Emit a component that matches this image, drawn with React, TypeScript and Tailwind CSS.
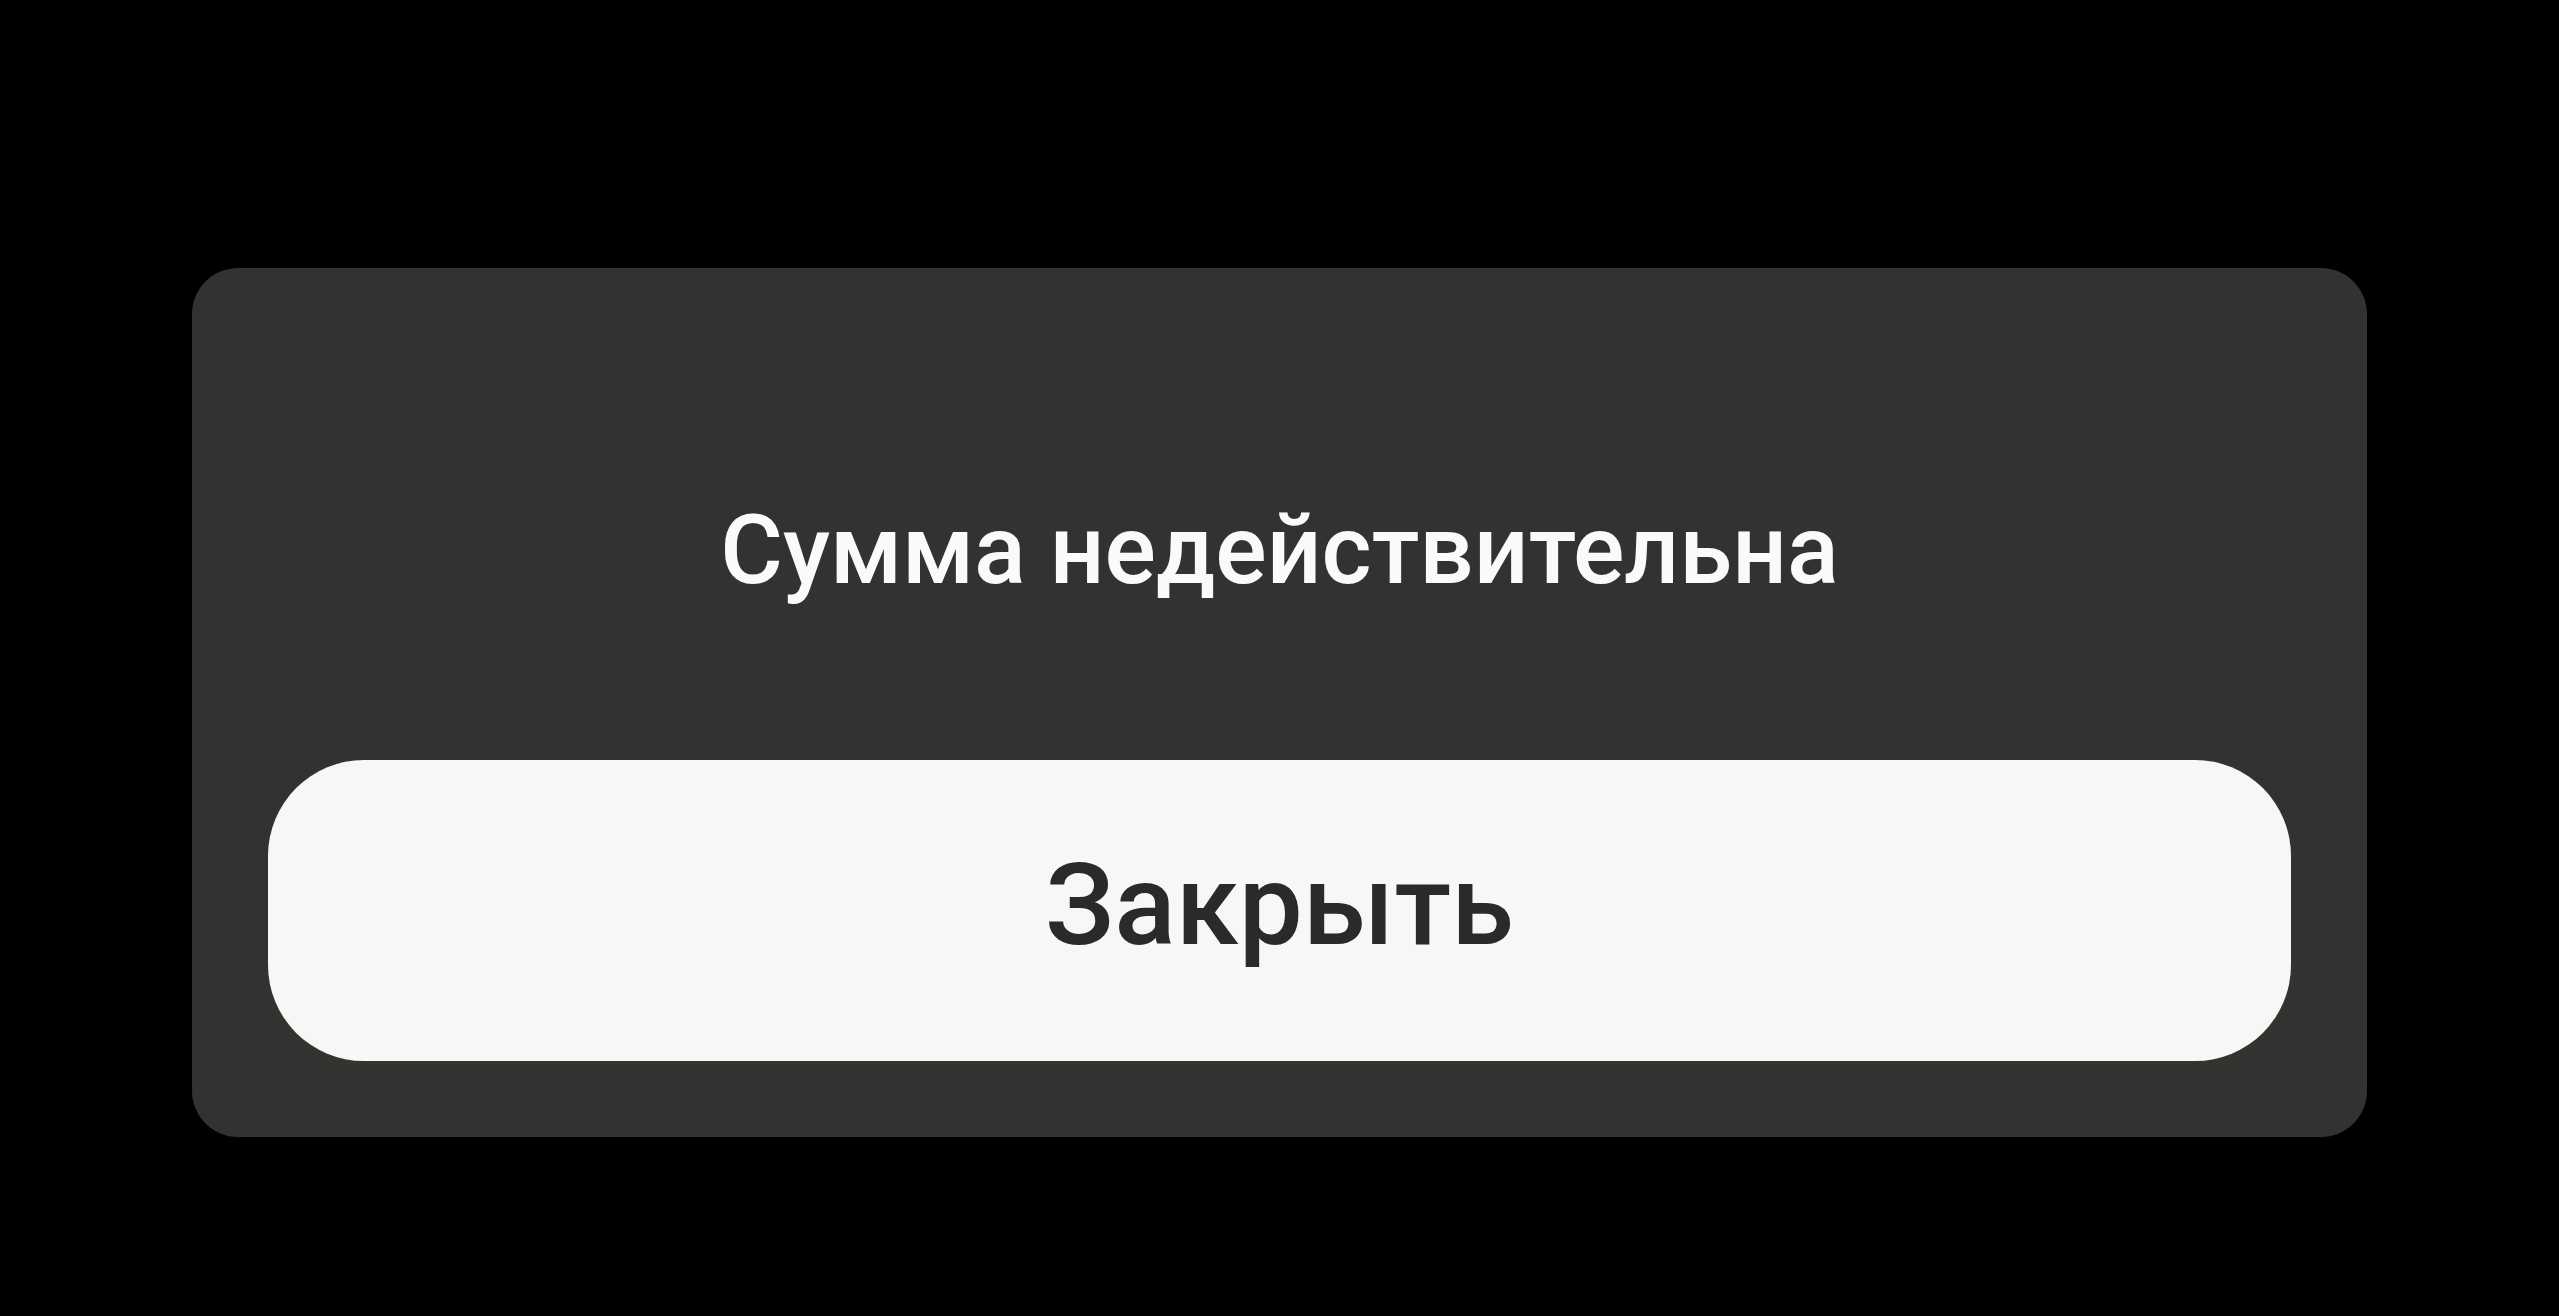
export default function App() {
  return (
    <div className="min-h-screen w-full bg-black pt-[268px] pl-[192px] font-['Roboto','Noto_Sans',sans-serif]">
      <div className="flex h-[869px] w-[2175px] flex-col items-center rounded-[46px] bg-[#323232] px-[76px] pt-[234px] pb-[76px]">
        <p className="text-[96px] leading-none font-medium text-[#fafafa]">
          Сумма недействительна
        </p>
        <button className="mt-auto flex h-[301px] w-full items-center justify-center rounded-[96px] bg-[#f7f7f7] pb-[12px] shadow-[0_4px_8px_rgba(60,60,40,0.5)]">
          <span className="text-[114px] leading-none font-medium text-[#2a2a2a]">
            Закрыть
          </span>
        </button>
      </div>
    </div>
  );
}
